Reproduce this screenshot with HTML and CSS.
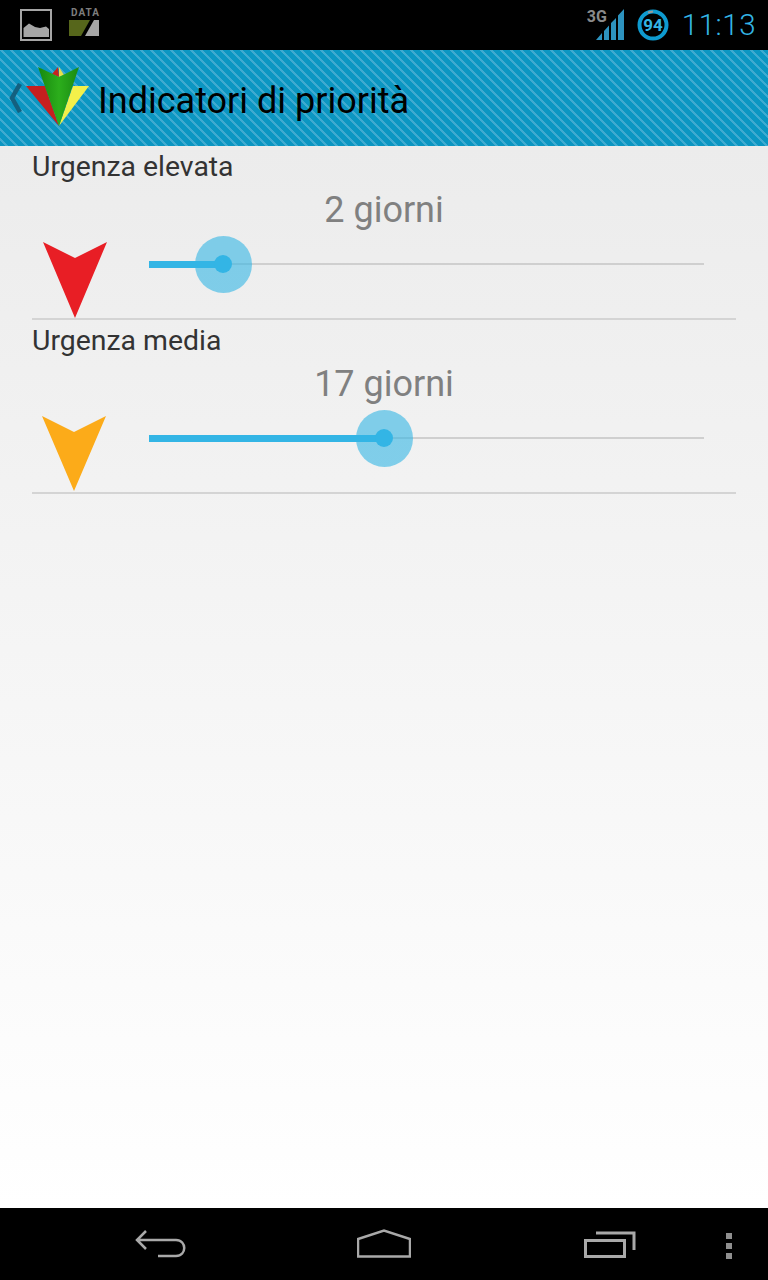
FILE: index.html
```html
<!DOCTYPE html>
<html>
<head>
    <meta charset="utf-8">
    <title>Indicatori di priorità</title>
    <link rel="stylesheet" href="styles.css">
</head>
<body>

    <div class="statusbar">
        <div class="status-left">
            <svg class="icon-picture" width="34" height="34" viewBox="0 0 34 34">
                <rect x="2" y="2" width="30" height="30" fill="none" stroke="#a6a6a6" stroke-width="2"/>
                <path d="M4.500 29 V20 L10 15.500 L16 19 L21 20 L27 18.500 L30 21 V29 Z" fill="#a6a6a6"/>
            </svg>
            <div class="data-wrap">
                <span class="data-label">DATA</span>
                <svg width="31" height="16" viewBox="0 0 31 16">
                    <path d="M0 0 H21 L12 16 H0 Z" fill="#56661b"/>
                    <path d="M30 0 V16 H16 L25 0 Z" fill="#a6a6a6"/>
                </svg>
            </div>
        </div>
        <div class="status-right">
            <div class="signal-wrap">
                <span class="label-3g">3G</span>
                <svg class="signal" width="28" height="32" viewBox="0 0 28 32">
                    <path d="M0 31 L6 24 V31 Z M8 22 L13 16.500 V31 H8 Z M15 14 L20 9 V31 H15 Z M22 6.500 L28 0 V31 H22 Z" fill="#2d93bf"/>
                </svg>
            </div>
            <svg class="battery" width="32" height="32" viewBox="0 0 32 32">
                <circle cx="16" cy="16" r="13.500" fill="none" stroke="#0e9bd0" stroke-width="4"/>
                <path d="M11 3.500 L16 2.500" stroke="#999" stroke-width="2" fill="none"/>
                <text x="16" y="22" text-anchor="middle" class="battery-text">94</text>
            </svg>
            <span class="clock">11:13</span>
        </div>
    </div>

    <div class="actionbar">
        <svg class="up" width="16" height="30" viewBox="0 0 16 30">
            <path d="M13 1 L5 15 L13 29" fill="none" stroke="#14607f" stroke-width="4.500"/>
        </svg>
        <svg class="logo" width="66" height="64" viewBox="0 0 66 64">
            <defs>
                <linearGradient id="greenLeft" x1="0" y1="0" x2="1" y2="0">
                    <stop offset="0" stop-color="#17870f"/>
                    <stop offset="1" stop-color="#2cae1c"/>
                </linearGradient>
                <linearGradient id="greenRight" x1="0" y1="0" x2="1" y2="0">
                    <stop offset="0" stop-color="#2cae1c"/>
                    <stop offset="1" stop-color="#1a8a12"/>
                </linearGradient>
            </defs>
            <path d="M1 21 L20 21 L34 61 Z" fill="#c61f1f"/>
            <path d="M27 9 L33 2 L34 12 Z" fill="#c9231f"/>
            <path d="M34 2 L39 10 L34 12 Z" fill="#e6e04c"/>
            <path d="M64 21 L48 21 L34 61 Z" fill="#f3f04a"/>
            <path d="M13 2 L34 12 L34 61 Z" fill="url(#greenLeft)"/>
            <path d="M54 2 L34 12 L34 61 Z" fill="url(#greenRight)"/>
        </svg>
        <h1>Indicatori di priorità</h1>
    </div>

    <div class="content">
        <div class="priority">
            <div class="priority-title">Urgenza elevata</div>
            <div class="priority-value">2 giorni</div>
            <div class="priority-row">
                <svg class="arrow" width="66" height="76" viewBox="0 0 66 76">
                    <path d="M1 0 L33 16 L65 0 L33 76 Z" fill="#e81e25"/>
                </svg>
                <div class="slider">
                    <div class="slider-fill fill-low"></div>
                    <div class="slider-thumb"></div>
                </div>
            </div>
        </div>
        <div class="priority">
            <div class="priority-title">Urgenza media</div>
            <div class="priority-value">17 giorni</div>
            <div class="priority-row">
                <svg class="arrow" width="66" height="76" viewBox="0 0 66 76">
                    <path d="M0 0 L32 16 L64 0 L32 75 Z" fill="#fcab19"/>
                </svg>
                <div class="slider">
                    <div class="slider-fill fill-mid"></div>
                    <div class="slider-thumb"></div>
                </div>
            </div>
        </div>
    </div>

    <div class="navbar">
        <svg width="52" height="30" viewBox="0 0 52 30">
            <path d="M12 2 L3 11 L12 20 M3 11 H42 C53 11 53 27 42 27 H24" fill="none" stroke="#a9a9a9" stroke-width="2.500"/>
        </svg>
        <svg width="54" height="30" viewBox="0 0 54 30">
            <path d="M1 27.500 V10 L27 1.500 L53 10 V27.500 Z" fill="none" stroke="#a9a9a9" stroke-width="2.500"/>
        </svg>
        <svg width="52" height="28" viewBox="0 0 52 28">
            <rect x="1.500" y="10.500" width="39" height="16" fill="none" stroke="#a9a9a9" stroke-width="3"/>
            <path d="M12 3 H50 V20" fill="none" stroke="#a9a9a9" stroke-width="3"/>
        </svg>
        <div class="menu-dots"><span></span><span></span><span></span></div>
    </div>

</body>
</html>
```

FILE: styles.css
```css
html, body {
    margin: 0;
    padding: 0;
}

body {
    width: 768px;
    height: 1280px;
    display: flex;
    flex-direction: column;
    font-family: "Roboto", sans-serif;
    overflow: hidden;
}

.statusbar {
    height: 50px;
    background-color: #000;
    display: flex;
    justify-content: space-between;
    align-items: center;
}

.status-left {
    display: flex;
    align-items: center;
    gap: 15px;
    padding-left: 19px;
}

.data-wrap {
    display: flex;
    flex-direction: column;
    gap: 2px;
    margin-bottom: 6px;
    margin-left: 1px;
}

.data-label {
    font-size: 10px;
    line-height: 10px;
    font-weight: 700;
    letter-spacing: 1px;
    color: #7d7d7d;
    padding-left: 2px;
}

.status-right {
    display: flex;
    align-items: center;
    padding-right: 12px;
}

.signal-wrap {
    position: relative;
    width: 37px;
    height: 32px;
    display: flex;
    justify-content: flex-end;
}

.label-3g {
    position: absolute;
    left: 0;
    top: 0;
    font-size: 16px;
    line-height: 16px;
    font-weight: 700;
    color: #8a8a8a;
}

.battery {
    margin-left: 13px;
}

.battery-text {
    font-size: 17px;
    font-weight: 700;
    fill: #33b5e5;
    font-family: "Roboto", sans-serif;
}

.clock {
    margin-left: 13px;
    font-size: 29.500px;
    font-weight: 300;
    color: #33b5e5;
    letter-spacing: 0.500px;
}

.actionbar {
    height: 96px;
    display: flex;
    align-items: center;
    background-color: #0b96c2;
    background-image: linear-gradient(45deg, #3faad0 12.5%, #0b96c2 12.5%, #0b96c2 50%, #3faad0 50%, #3faad0 62.5%, #0b96c2 62.5%);
    background-size: 10px 10px;
}

.up {
    margin-left: 7px;
}

.logo {
    margin-left: 2px;
    margin-top: -2px;
}

.actionbar h1 {
    margin: 6px 0 0 7px;
    font-size: 36px;
    font-weight: 400;
    color: #000;
}

.content {
    flex: 1;
    padding: 0 32px;
    background: linear-gradient(to bottom, #ececec, #ffffff);
}

.priority {
    height: 174px;
    box-sizing: border-box;
    border-bottom: 2px solid #d4d4d4;
}

.priority-title {
    font-size: 28.400px;
    line-height: 42px;
    color: #333;
}

.priority-value {
    font-size: 36px;
    line-height: 46px;
    color: #808080;
    text-align: center;
    margin-top: -1px;
}

.priority-row {
    display: flex;
    align-items: flex-start;
    padding-top: 9px;
}

.arrow {
    margin-left: 10px;
}

.slider {
    position: relative;
    width: 555px;
    height: 2px;
    margin-left: 41px;
    margin-top: 21px;
    background-color: #cfcfcf;
}

.slider-fill {
    position: absolute;
    left: 0;
    top: -2px;
    height: 7px;
    background-color: #33b5e5;
}

.fill-low {
    width: 74px;
}

.fill-mid {
    width: 235px;
}

.slider-thumb {
    position: absolute;
    top: -27.500px;
    width: 57px;
    height: 57px;
    border-radius: 50%;
    background-color: rgba(51, 181, 229, 0.6);
}

.slider-thumb::after {
    content: "";
    position: absolute;
    left: 19.500px;
    top: 19.500px;
    width: 18px;
    height: 18px;
    border-radius: 50%;
    background-color: #33b5e5;
}

.fill-low + .slider-thumb {
    left: 45.500px;
}

.fill-mid + .slider-thumb {
    left: 206.500px;
}

.navbar {
    height: 72px;
    background-color: #000;
    display: grid;
    grid-template-columns: 134px 52px 171px 54px 173px 52px 1fr;
    align-items: center;
}

.navbar svg:nth-child(1) { grid-column: 2; }
.navbar svg:nth-child(2) { grid-column: 4; }
.navbar svg:nth-child(3) { grid-column: 6; }

.menu-dots {
    grid-column: 7;
    display: flex;
    flex-direction: column;
    gap: 4px;
    margin-left: 90px;
    margin-top: 3px;
}

.menu-dots span {
    width: 6px;
    height: 6px;
    background-color: #8f8f8f;
}
```
